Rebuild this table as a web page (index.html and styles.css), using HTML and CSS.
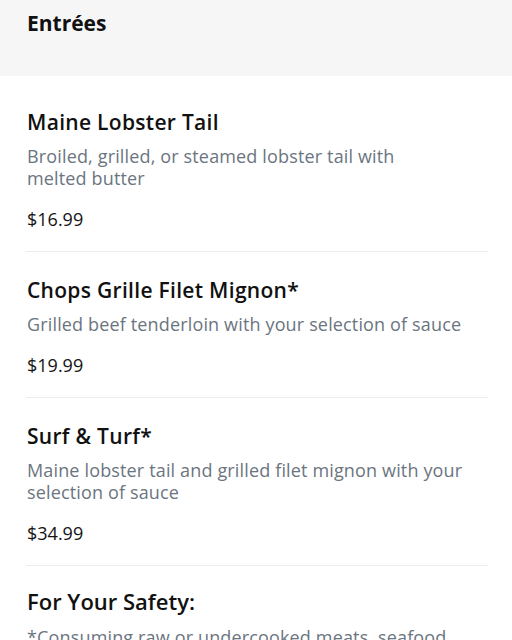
FILE: index.html
```html
<!DOCTYPE html>
<html>
<head>
<meta charset="utf-8">
<link rel="stylesheet" href="styles.css">
</head>
<body>
<header class="section-header">
  <h1 class="section-title">Entrées</h1>
</header>
<main class="menu">
  <article class="item">
    <h2 class="item-name">Maine Lobster Tail</h2>
    <p class="item-desc">Broiled, grilled, or steamed lobster tail with<br>melted butter</p>
    <p class="item-price">$16.99</p>
  </article>
  <article class="item">
    <h2 class="item-name">Chops Grille Filet Mignon*</h2>
    <p class="item-desc">Grilled beef tenderloin with your selection of sauce</p>
    <p class="item-price">$19.99</p>
  </article>
  <article class="item">
    <h2 class="item-name">Surf &amp; Turf*</h2>
    <p class="item-desc">Maine lobster tail and grilled filet mignon with your<br>selection of sauce</p>
    <p class="item-price">$34.99</p>
  </article>
  <section class="safety">
    <h2 class="safety-title">For Your Safety:</h2>
    <p class="item-desc">*Consuming raw or undercooked meats, seafood,<br>shellfish or eggs may increase your risk of foodborne illness.</p>
  </section>
</main>
</body>
</html>
```
FILE: styles.css
```css
* { box-sizing: border-box; }
html, body { margin: 0; padding: 0; background: #fff; }
body {
  font-family: "Open Sans", "Liberation Sans", sans-serif;
  color: #141414;
  height: 640px;
  overflow: hidden;
}
.section-header {
  background: #f6f6f6;
  height: 76px;
  padding: 10px 27px 0;
}
.section-title {
  margin: 0;
  font-size: 21px;
  line-height: 26px;
  font-weight: 700;
  color: #111;
}
.menu {
  padding: 0 24px 0 26px;
}
.item {
  border-bottom: 1px solid #ececec;
  padding: 26px 0 21px 1px;
  display: flex;
  flex-direction: column;
}
.item:first-child { padding-top: 34px; }
.item-name, .safety-title {
  margin: 0;
  font-size: 21px;
  line-height: 24px;
  font-weight: 600;
  letter-spacing: 0.3px;
  color: #111;
}
.item-desc {
  margin: 11px 0 0;
  font-size: 18px;
  line-height: 22px;
  letter-spacing: 0.15px;
  color: #6b7580;
}
.item-price {
  margin: 19px 0 0;
  font-size: 18px;
  line-height: 22px;
  color: #141414;
}
.safety {
  padding: 22px 0 0 1px;
}
.safety-title {
  font-size: 22px;
  line-height: 26px;
  letter-spacing: 0;
}
.safety .item-desc { margin-top: 12px; }
```
